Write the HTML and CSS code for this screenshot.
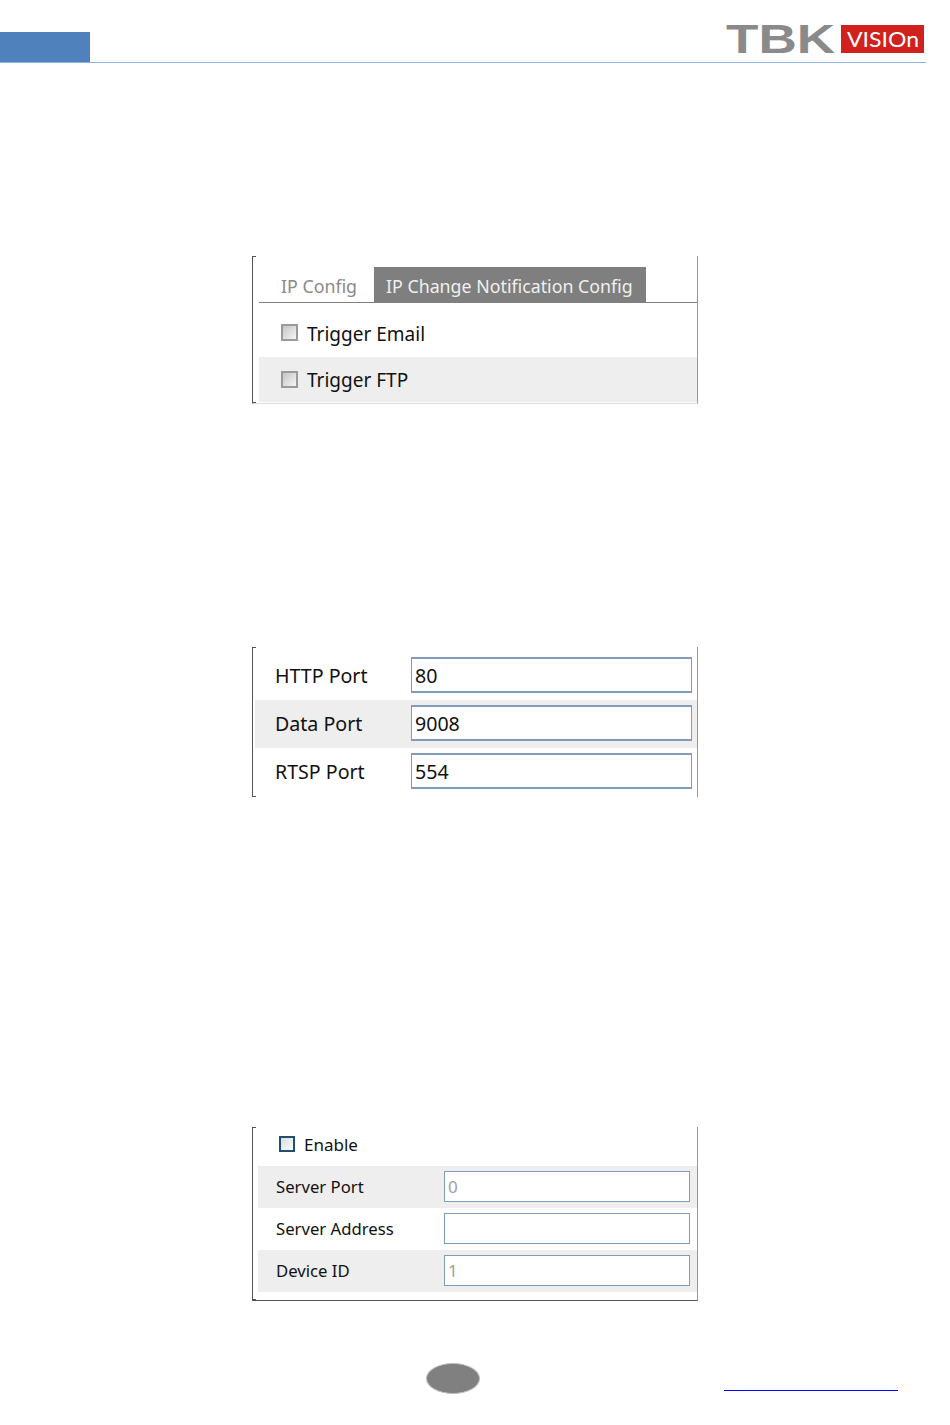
FILE: index.html
```html
<!DOCTYPE html>
<html lang="en">
<head>
<meta charset="utf-8">
<title>TBK Vision manual page</title>
<link rel="stylesheet" href="styles.css">
</head>
<body>
<header class="page-header">
  <div class="header-tab"></div>
  <svg class="logo" width="200" height="44" viewBox="0 0 200 44" role="img" aria-label="TBK Vision">
    <text class="logo-tbk" x="1" y="37" textLength="109" lengthAdjust="spacingAndGlyphs">TBK</text>
    <rect x="116" y="9" width="83" height="28" fill="#d0211f"/>
    <text class="logo-vision" x="122" y="31" textLength="72" lengthAdjust="spacingAndGlyphs">VISIOn</text>
  </svg>
</header>

<section class="panel panel-tabs">
  <div class="tabs">
    <span class="tab">IP Config</span>
    <span class="tab tab-active">IP Change Notification Config</span>
  </div>
  <label class="check-row check-row-first"><input type="checkbox" class="check"><span class="check-text">Trigger Email</span></label>
  <label class="check-row check-row-alt"><input type="checkbox" class="check"><span class="check-text">Trigger FTP</span></label>
</section>

<section class="panel panel-ports">
  <div class="port-row port-row-first"><span class="port-label">HTTP Port</span><input class="port-input" value="80"></div>
  <div class="port-row port-row-alt"><span class="port-label">Data Port</span><input class="port-input" value="9008"></div>
  <div class="port-row"><span class="port-label">RTSP Port</span><input class="port-input" value="554"></div>
</section>

<section class="panel panel-server">
  <label class="enable-row"><input type="checkbox" class="check check-blue"><span>Enable</span></label>
  <div class="server-row server-row-alt"><span class="server-label">Server Port</span><input class="server-input" value="0" disabled></div>
  <div class="server-row"><span class="server-label">Server Address</span><input class="server-input"></div>
  <div class="server-row server-row-alt"><span class="server-label">Device ID</span><input class="server-input" value="1" disabled></div>
</section>

<footer class="page-footer">
  <div class="page-dot"></div>
  <div class="footer-link"></div>
</footer>
</body>
</html>
```

FILE: styles.css
```css
* { box-sizing: border-box; }
html, body { margin: 0; padding: 0; }
body {
  width: 950px;
  height: 1425px;
  overflow: hidden;
  background: #fff;
  font-family: "Noto Sans", "Open Sans", sans-serif;
  color: #111;
}

.page-header {
  width: 926px;
  height: 63px;
  border-bottom: 1px solid #8db3e0;
  display: flex;
  justify-content: space-between;
  align-items: flex-end;
}
.header-tab { width: 90px; height: 30px; background: #4f81bd; }
.logo { margin: 0 1px 2px 0; display: block; }
.logo-tbk { font: 700 40px "Liberation Sans", sans-serif; fill: #8a8a8a; }
.logo-vision { font: 400 22px "Lato", sans-serif; fill: #fff; }

.panel {
  position: relative;
  width: 446px;
  margin-left: 252px;
  border-left: 1px solid #555;
  border-right: 1px solid #999;
}
.panel::before, .panel::after {
  content: "";
  position: absolute;
  left: 0;
  width: 3px;
  height: 1px;
  background: #555;
}
.panel::before { top: 0; }
.panel::after { bottom: 0; }

.panel-tabs {
  margin-top: 193px;
  height: 148px;
  padding: 11px 0 0 6px;
  border-bottom: 1px solid #ddd;
}
.tabs {
  height: 36px;
  display: flex;
  border-bottom: 1px solid #7f7f7f;
  font-size: 17.8px;
}
.tab {
  padding-left: 22px;
  width: 115px;
  line-height: 38px;
  color: #8a8a8a;
}
.tab-active {
  width: 272px;
  height: 36px;
  padding-left: 12px;
  background: #7f7f7f;
  color: #f0f0f0;
}
.check-row {
  display: flex;
  align-items: center;
  padding-left: 22px;
  font-size: 19px;
}
.check-row-first { height: 54px; padding-top: 4px; }
.check-row-first .check-text { padding-top: 4px; }
.check-row-alt { height: 45px; padding-bottom: 1px; background: #eee; }
.check-row-alt .check-text { padding-top: 2px; }
.check {
  appearance: none;
  margin: 0 9px 0 0;
  width: 17px;
  height: 17px;
  flex: none;
  border: 2px solid #9a9a9a;
  background: linear-gradient(135deg, #c4c4c4, #f6f6f6);
}
.check-blue {
  width: 16px;
  height: 16px;
  border-color: #1f4e79;
  background: linear-gradient(135deg, #dcdcdc, #fbfbfb);
}

.panel-ports {
  margin-top: 243px;
  height: 150px;
  padding-left: 2px;
}
.port-row {
  height: 48px;
  display: flex;
  align-items: center;
  padding: 0 0 2px 20px;
}
.port-row-first { height: 53px; padding-top: 5px; }
.port-row-alt { background: #eee; }
.port-label { width: 136px; font-size: 19.6px; }
.port-input {
  width: 281px;
  height: 36px;
  padding: 0 3px;
  border: 2px solid #7f9db9;
  border-width: 2px 1.5px;
  font: 19.6px "Noto Sans", sans-serif;
  color: #111;
  background: #fff;
}

.panel-server {
  margin-top: 330px;
  height: 174px;
  border-bottom: 1px solid #555;
  padding-left: 5px;
}
.enable-row {
  height: 39px;
  display: flex;
  align-items: center;
  padding: 0 0 5px 21px;
  font-size: 17px;
}
.server-row {
  height: 42px;
  display: flex;
  align-items: center;
  padding: 0 0 2px 18px;
}
.server-row-alt { background: #eee; }
.server-label { width: 168px; font-size: 16.7px; }
.server-input {
  width: 246px;
  height: 31px;
  padding: 0 3px;
  border: 1px solid #7f9db9;
  font: 17px "Noto Sans", sans-serif;
  background: #fff;
}
.server-input:disabled { color: #a0a0a0; background: #fff; }

.page-footer {
  margin-top: 62px;
  width: 898px;
  height: 31px;
  padding-left: 426px;
  display: flex;
  justify-content: space-between;
  align-items: flex-end;
}
.page-dot {
  width: 54px;
  height: 31px;
  border-radius: 50%;
  background: #808080;
  border: 1px solid #bdbdbd;
}
.footer-link {
  width: 174px;
  height: 1px;
  margin-bottom: 3px;
  background: #0000ff;
}
```
